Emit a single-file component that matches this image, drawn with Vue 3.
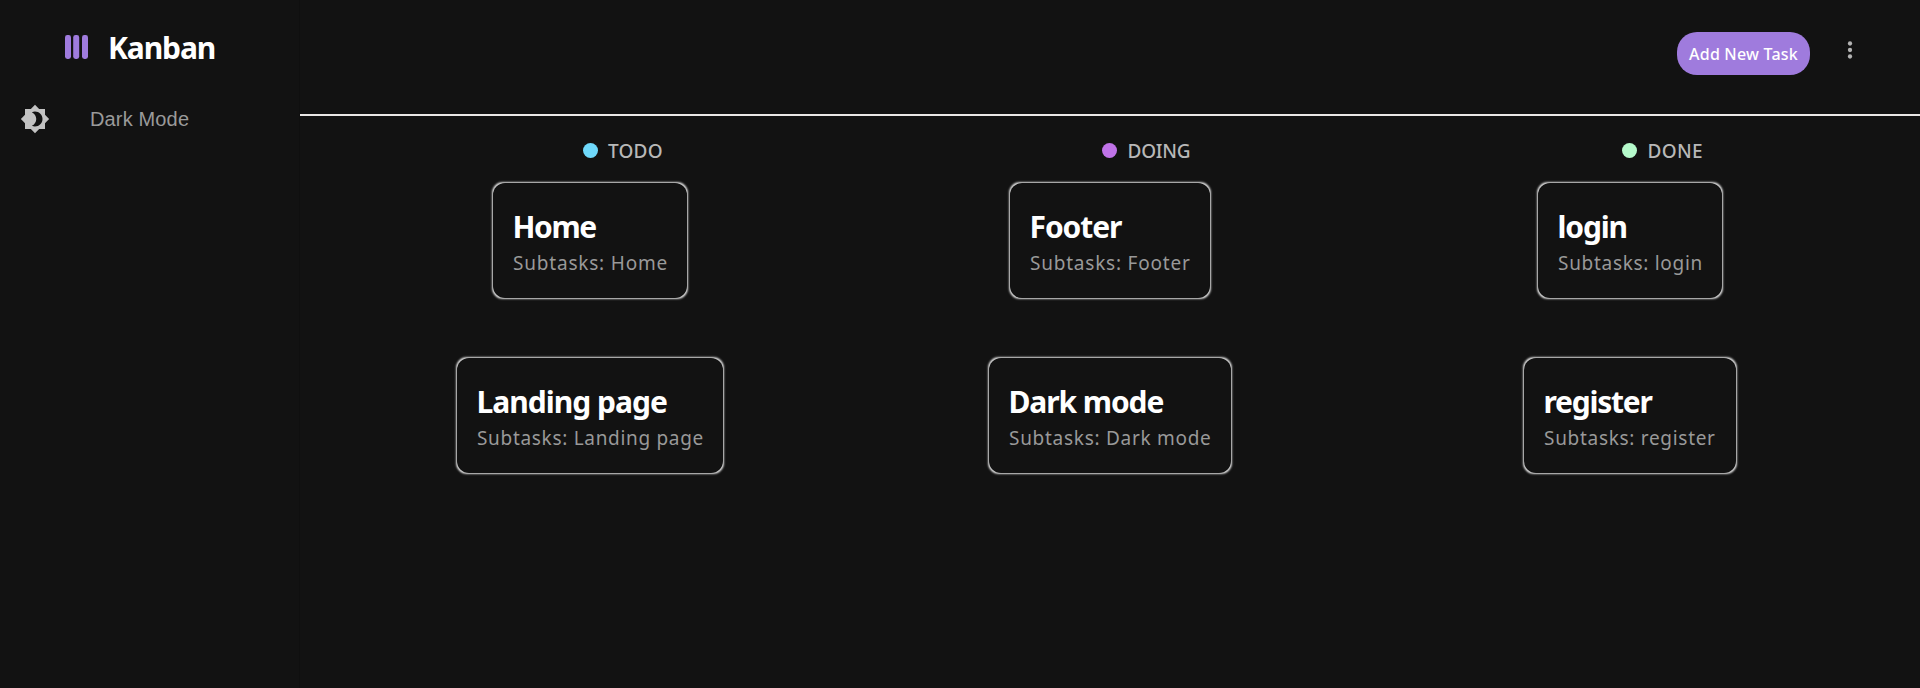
<script setup>
const columns = [
  {
    name: 'TODO', color: '#6fd9fb', spacing: 0.2,
    tasks: [
      { title: 'Home', width: 194, titleSpacing: -1.4, subSpacing: 0.8 },
      { title: 'Landing page', width: 266, titleSpacing: -0.98, subSpacing: 0.69 },
    ],
  },
  {
    name: 'DOING', color: '#c073e8', spacing: -0.25,
    tasks: [
      { title: 'Footer', width: 200, titleSpacing: -1.08, subSpacing: 0.78 },
      { title: 'Dark mode', width: 242, titleSpacing: -1.09, subSpacing: 0.72 },
    ],
  },
  {
    name: 'DONE', color: '#b5facb', spacing: 0.3,
    tasks: [
      { title: 'login', width: 184, titleSpacing: -1.15, subSpacing: 0.7 },
      { title: 'register', width: 212, titleSpacing: -1.25, subSpacing: 0.7 },
    ],
  },
]
</script>

<template>
  <div class="app">
    <aside class="sidebar">
      <div class="brand">
        <svg class="logo" width="24" height="24" viewBox="0 0 24 24">
          <rect x="0" y="0" width="6" height="24" rx="2.4" />
          <rect x="8.2" y="0" width="6" height="24" rx="2.4" />
          <rect x="17" y="0" width="6" height="24" rx="2.4" />
        </svg>
        <h1 class="name">Kanban</h1>
      </div>
      <div class="mode">
        <svg class="mode-icon" width="30" height="30" viewBox="0 0 24 24">
          <path d="M20 8.69V4h-4.69L12 .69 8.69 4H4v4.69L.69 12 4 15.31V20h4.69L12 23.31 15.31 20H20v-4.69L23.31 12 20 8.69zM12 18c-.89 0-1.74-.2-2.5-.55C11.56 16.5 13 14.42 13 12s-1.44-4.5-3.5-5.45C10.26 6.2 11.11 6 12 6c3.31 0 6 2.69 6 6s-2.69 6-6 6z" />
        </svg>
        <span class="mode-label">Dark Mode</span>
      </div>
    </aside>
    <main class="main">
      <header class="header">
        <button class="add">Add New Task</button>
        <svg class="more" width="24" height="24" viewBox="0 0 24 24">
          <circle cx="12" cy="5.5" r="2.15" />
          <circle cx="12" cy="12" r="2.15" />
          <circle cx="12" cy="18.5" r="2.15" />
        </svg>
      </header>
      <div class="board">
        <section v-for="col in columns" :key="col.name" class="column">
          <div class="column-head">
            <span class="dot" :style="{ background: col.color }"></span>
            <span class="column-name" :style="{ letterSpacing: col.spacing + 'px' }">{{ col.name }}</span>
          </div>
          <article v-for="t in col.tasks" :key="t.title" class="card" :style="{ width: t.width + 'px' }">
            <div class="card-body">
              <h2 class="title" :style="{ letterSpacing: t.titleSpacing + 'px' }">{{ t.title }}</h2>
              <p class="sub" :style="{ letterSpacing: t.subSpacing + 'px' }">Subtasks: {{ t.title }}</p>
            </div>
          </article>
        </section>
      </div>
    </main>
  </div>
</template>

<style>
body { background: #121212; }
</style>

<style scoped>
.app {
  display: flex;
  height: 688px;
  overflow: hidden;
  background: #121212;
  color: #fff;
  font-family: "Noto Sans", sans-serif;
}
.sidebar {
  box-sizing: border-box;
  width: 300px;
  flex: none;
  border-right: 1px solid #0f0f0f;
}
.brand {
  display: flex;
  align-items: center;
  height: 42px;
  margin-top: 26px;
  padding-left: 65px;
}
.logo { fill: #9f7bdd; flex: none; }
.name {
  margin: 2px 0 0 19px;
  font-size: 30px;
  line-height: 42px;
  font-weight: 700;
  letter-spacing: -1.1px;
}
.mode {
  display: flex;
  align-items: center;
  height: 30px;
  margin-top: 36px;
  padding-left: 20px;
}
.mode-icon { fill: #c2c2c2; flex: none; }
.mode-label {
  margin-left: 40px;
  font: 20px/30px "Liberation Sans", Arial, sans-serif;
  color: #9a9a9a;
  letter-spacing: 0.15px;
}
.main { flex: 1; }
.header {
  box-sizing: border-box;
  display: flex;
  justify-content: flex-end;
  height: 116px;
  padding: 32px 58px 0 0;
  border-bottom: 2px solid #e9e7e5;
}
.add {
  width: 133px;
  height: 43px;
  padding: 1px 0 0;
  border: 0;
  border-radius: 20px;
  background: #9f7bdd;
  color: #fff;
  font: 500 16px "Noto Sans", sans-serif;
  letter-spacing: 0.2px;
  white-space: nowrap;
}
.more { margin: 6px 0 0 28px; fill: #b3b3b3; }
.board {
  display: grid;
  grid-template-columns: repeat(3, 520px);
  padding: 21px 30px 0;
}
.column {
  display: flex;
  flex-direction: column;
  align-items: center;
}
.column-head {
  box-sizing: border-box;
  display: flex;
  align-items: center;
  width: 100%;
  height: 28px;
  margin-bottom: 18px;
  padding-left: 252px;
}
.column:first-child .column-head { padding-left: 253px; }
.column:first-child .column-name { margin-left: 10px; }
.dot {
  width: 15px;
  height: 15px;
  margin-bottom: 1px;
  border-radius: 50%;
}
.column-name {
  margin-left: 10.5px;
  font-size: 19px;
  line-height: 28px;
  font-weight: 500;
  color: #b8b8b8;
}
.card {
  height: 115px;
  margin-bottom: 60px;
  border-radius: 10px;
  background: #c4c4c4;
  box-shadow: 0 0 2px 1px #dedede;
  white-space: nowrap;
}
.card-body {
  box-sizing: border-box;
  height: 100%;
  padding: 24px 20px 0;
  border-radius: 12px;
  background: #121212;
}
.title {
  margin: 0 0 0 -0.5px;
  font-size: 30px;
  line-height: 40px;
  font-weight: 700;
}
.sub {
  margin: 3px 0 0;
  font-size: 19px;
  line-height: 26px;
  color: #999;
}
</style>
